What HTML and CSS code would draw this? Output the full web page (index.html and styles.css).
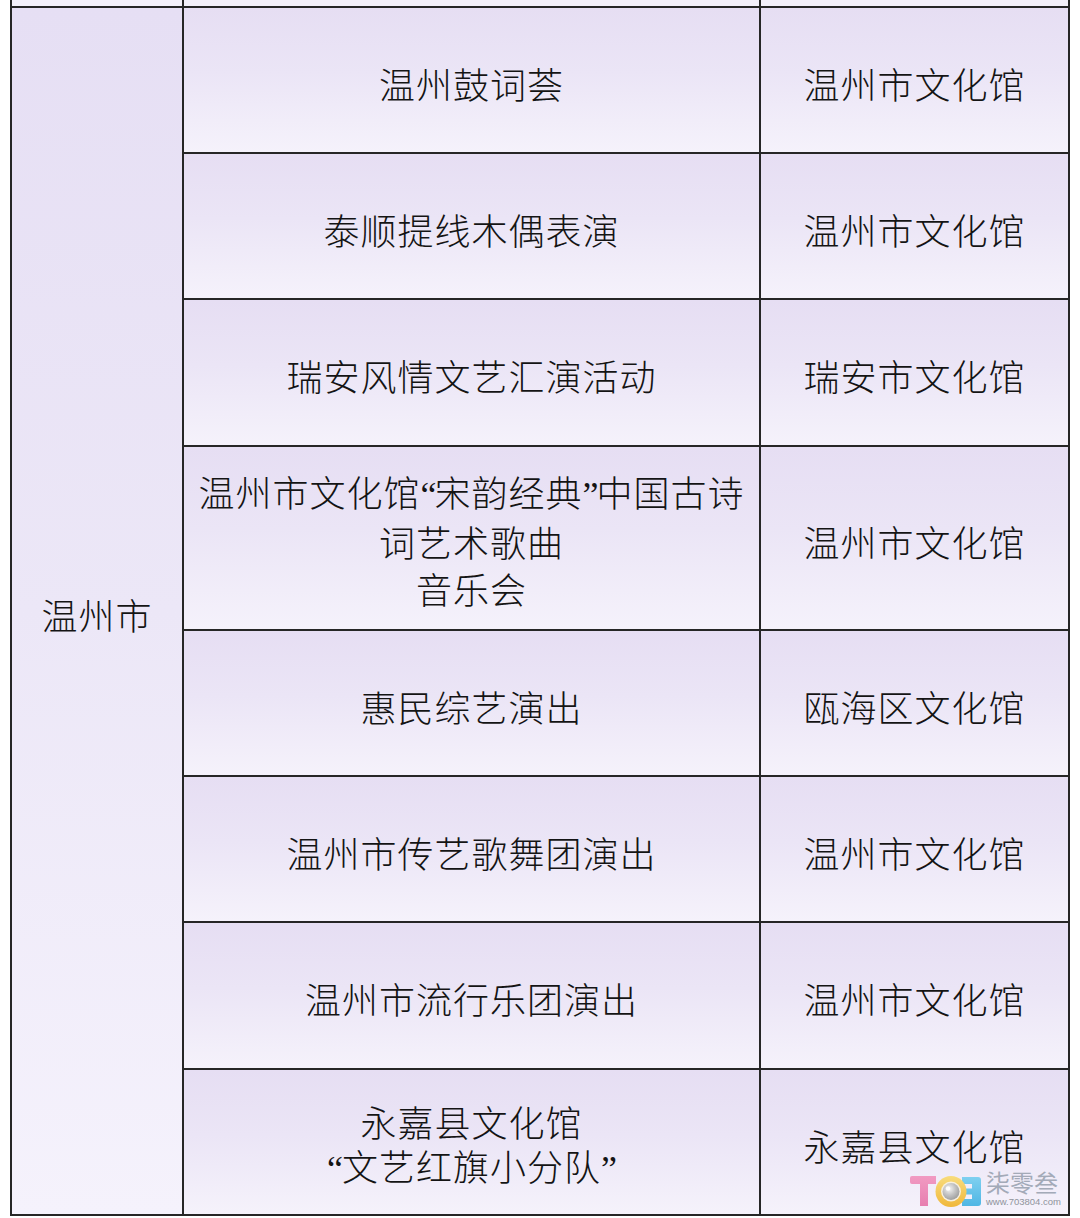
FILE: index.html
```html
<!DOCTYPE html>
<html lang="zh-CN">
<head>
<meta charset="utf-8">
<link rel="stylesheet" href="styles.css">
</head>
<body>
<div class="page">
  <div class="table">
    <div class="cell partial"></div>
    <div class="cell partial"></div>
    <div class="cell partial"></div>

    <div class="cell city"><div class="txt">温州市</div></div>

    <div class="cell r"><div class="txt">温州鼓词荟</div></div>
    <div class="cell r"><div class="txt">温州市文化馆</div></div>

    <div class="cell r"><div class="txt">泰顺提线木偶表演</div></div>
    <div class="cell r"><div class="txt">温州市文化馆</div></div>

    <div class="cell r"><div class="txt">瑞安风情文艺汇演活动</div></div>
    <div class="cell r"><div class="txt">瑞安市文化馆</div></div>

    <div class="cell tall"><div class="txt">温州市文化馆<span class="q qo">“</span>宋韵经典<span class="q qc">”</span>中国古诗<br>词艺术歌曲<br>音乐会</div></div>
    <div class="cell r"><div class="txt">温州市文化馆</div></div>

    <div class="cell r"><div class="txt">惠民综艺演出</div></div>
    <div class="cell r"><div class="txt">瓯海区文化馆</div></div>

    <div class="cell r"><div class="txt">温州市传艺歌舞团演出</div></div>
    <div class="cell r"><div class="txt">温州市文化馆</div></div>

    <div class="cell r"><div class="txt">温州市流行乐团演出</div></div>
    <div class="cell r"><div class="txt">温州市文化馆</div></div>

    <div class="cell two"><div class="txt">永嘉县文化馆<br><span class="q qo2">“</span>文艺红旗小分队<span class="q qc2">”</span></div></div>
    <div class="cell r"><div class="txt">永嘉县文化馆</div></div>
  </div>

  <div class="watermark">
    <svg class="logo" width="74" height="34" viewBox="0 0 74 34">
      <defs>
        <linearGradient id="pk" x1="0" y1="0" x2="0" y2="1">
          <stop offset="0" stop-color="#f19ac2"/>
          <stop offset="1" stop-color="#e77fb0"/>
        </linearGradient>
        <linearGradient id="yl" x1="0" y1="0" x2="0" y2="1">
          <stop offset="0" stop-color="#f8dc7c"/>
          <stop offset="1" stop-color="#f0b83c"/>
        </linearGradient>
        <radialGradient id="gr" cx="0.4" cy="0.35" r="0.7">
          <stop offset="0" stop-color="#f4f4f4"/>
          <stop offset="0.5" stop-color="#c4c4c4"/>
          <stop offset="1" stop-color="#9a9a9a"/>
        </radialGradient>
        <linearGradient id="bl" x1="0" y1="0" x2="0" y2="1">
          <stop offset="0" stop-color="#7fd0f0"/>
          <stop offset="1" stop-color="#4fb6e4"/>
        </linearGradient>
      </defs>
      <path d="M2 4 Q2 2 4 2 L28 2 L28 10 L20 10 L20 32 L12 32 L12 10 L4 10 Q2 10 2 8 Z" fill="url(#pk)"/>
      <path d="M54 3 L70 3 Q73 3 73 6 L73 29 Q73 32 70 32 L54 32 L54 25 L64 25 L64 20.5 L57 20.5 L57 14.5 L64 14.5 L64 10 L54 10 Z" fill="url(#bl)"/>
      <circle cx="43" cy="17.5" r="15.5" fill="url(#yl)"/>
      <circle cx="43" cy="17.5" r="10" fill="#f7f0e0"/>
      <circle cx="43" cy="17.5" r="8.5" fill="url(#gr)"/>
      <circle cx="40" cy="14.5" r="2.2" fill="#ffffff" opacity="0.9"/>
    </svg>
    <div class="brand">
      <div class="brand-name">柒零叁</div>
      <div class="brand-url">www.703804.com</div>
    </div>
  </div>
</div>
</body>
</html>
```

FILE: styles.css
```css
html, body {
  margin: 0;
  padding: 0;
  background: #ffffff;
}

.page {
  position: relative;
  width: 1080px;
  height: 1218px;
  overflow: hidden;
}

.table {
  margin-left: 10px;
  width: 1060px;
  box-sizing: border-box;
  display: grid;
  grid-template-columns: 170px 575px 307px;
  grid-template-rows: 6px 144px 144px 145px 182px 144px 144px 145px 144px;
  gap: 2px;
  padding: 0 2px 2px 2px;
  background: #262626;
  font-family: "Noto Sans CJK SC", sans-serif;
  font-weight: 300;
  color: #141414;
  font-size: 36px;
  letter-spacing: 1px;
}

.cell {
  display: flex;
  align-items: center;
  justify-content: center;
  text-align: center;
  white-space: nowrap;
  box-sizing: border-box;
  background: linear-gradient(180deg, #e6def3 0%, #ebe5f6 45%, #f5f2fb 100%);
}

.txt {
  text-align: center;
}

.partial {
  background: #f3f0fa;
}

.city {
  grid-column: 1;
  grid-row: 2 / 10;
  background: linear-gradient(180deg, #e6dff4 0%, #ece7f7 50%, #f5f2fc 100%);
  padding-top: 5px;
}

.r {
  line-height: 46px;
  padding-top: 5px;
}

.tall {
  line-height: 46.5px;
  padding-top: 3px;
}

.two {
  line-height: 44px;
  padding-top: 5px;
}

.q {
  display: inline-block;
  overflow: visible;
  font-family: "Liberation Serif", serif;
  letter-spacing: 0;
}

.qo {
  width: 14px;
  text-align: right;
}

.qc {
  width: 14px;
  text-align: left;
}

.qo2 {
  width: 15px;
  text-align: right;
}

.qc2 {
  width: 15px;
  text-align: left;
}

.watermark {
  position: absolute;
  left: 908px;
  top: 1169px;
  display: flex;
  align-items: center;
  gap: 4px;
}

.logo {
  display: block;
  margin-top: 4px;
}

.brand {
  display: flex;
  flex-direction: column;
  align-items: flex-start;
}

.brand-name {
  font-family: "Noto Sans CJK SC", sans-serif;
  font-size: 24px;
  line-height: 26px;
  color: #a3aab8;
  letter-spacing: 0;
}

.brand-url {
  font-family: "Liberation Sans", sans-serif;
  font-size: 9.5px;
  line-height: 12px;
  color: #8f949c;
  margin-top: 1px;
}
```
